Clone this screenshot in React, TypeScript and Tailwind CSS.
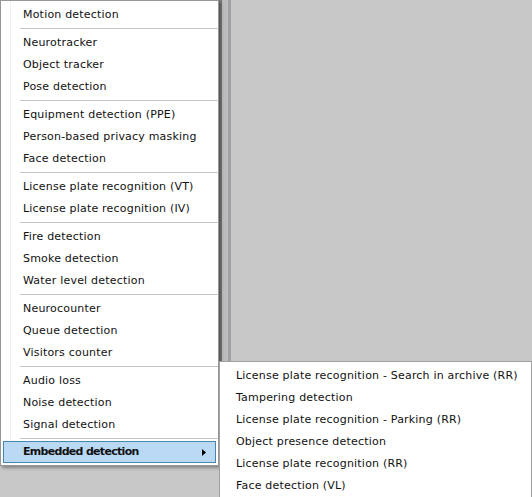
import React from "react";

type Entry = { label: string } | "sep";

const MAIN: Entry[] = [
  { label: "Motion detection" },
  "sep",
  { label: "Neurotracker" },
  { label: "Object tracker" },
  { label: "Pose detection" },
  "sep",
  { label: "Equipment detection (PPE)" },
  { label: "Person-based privacy masking" },
  { label: "Face detection" },
  "sep",
  { label: "License plate recognition (VT)" },
  { label: "License plate recognition (IV)" },
  "sep",
  { label: "Fire detection" },
  { label: "Smoke detection" },
  { label: "Water level detection" },
  "sep",
  { label: "Neurocounter" },
  { label: "Queue detection" },
  { label: "Visitors counter" },
  "sep",
  { label: "Audio loss" },
  { label: "Noise detection" },
  { label: "Signal detection" },
  "sep",
];

const SUB = [
  "License plate recognition - Search in archive (RR)",
  "Tampering detection",
  "License plate recognition - Parking (RR)",
  "Object presence detection",
  "License plate recognition (RR)",
  "Face detection (VL)",
];

const font = { fontFamily: '"DejaVu Sans", Verdana, sans-serif' };

export default function App() {
  return (
    <div
      className="relative w-[532px] h-[497px] overflow-hidden bg-[#c8c8c8] text-[11px] tracking-[0.2px] text-[#111]"
      style={font}
    >
      {/* background splitter strips */}
      <div className="flex h-full">
        <div className="w-[219px]" />
        <div className="w-[3px] bg-[#7c7c7c]" />
        <div className="w-[6px] bg-[#bcbcbf]" />
        <div className="w-[3px] bg-[#a2a2a6]" />
        <div className="flex-1" />
      </div>

      {/* main context menu */}
      <div className="absolute left-0 top-0 w-[219px] border border-[#979797] bg-white py-[2px] shadow-[2px_2px_3px_rgba(0,0,0,0.35)]">
        <div className="absolute left-[9px] top-0 bottom-0 w-px bg-[#efefef]" />
        {MAIN.map((e, i) =>
          e === "sep" ? (
            <div key={i} className="flex h-[6px] items-center pl-[19px]">
              <div className="h-px flex-1 bg-[#c5c5c5]" />
            </div>
          ) : (
            <div key={i} className="relative flex h-[22px] items-center pl-[22px] pt-[2px]">
              {e.label}
            </div>
          )
        )}
        <div className="relative mx-[2px] flex h-[22px] items-center justify-between border border-[#4a86ad] bg-[#b9d9f5] pl-[19px] pr-[9px] pt-px">
          <span className="font-bold tracking-[-0.7px]">Embedded detection</span>
          <svg width="4" height="7" viewBox="0 0 4 7">
            <path d="M0 0 L4 3.5 L0 7 Z" fill="#000" />
          </svg>
        </div>
      </div>

      {/* submenu */}
      <div className="absolute left-[219px] top-[361px] w-[313px] border border-[#a0a0a0] bg-white py-[2px]">
        {SUB.map((s) => (
          <div key={s} className="flex h-[22px] items-center pl-[16px] pt-[2px]">
            {s}
          </div>
        ))}
      </div>
    </div>
  );
}
